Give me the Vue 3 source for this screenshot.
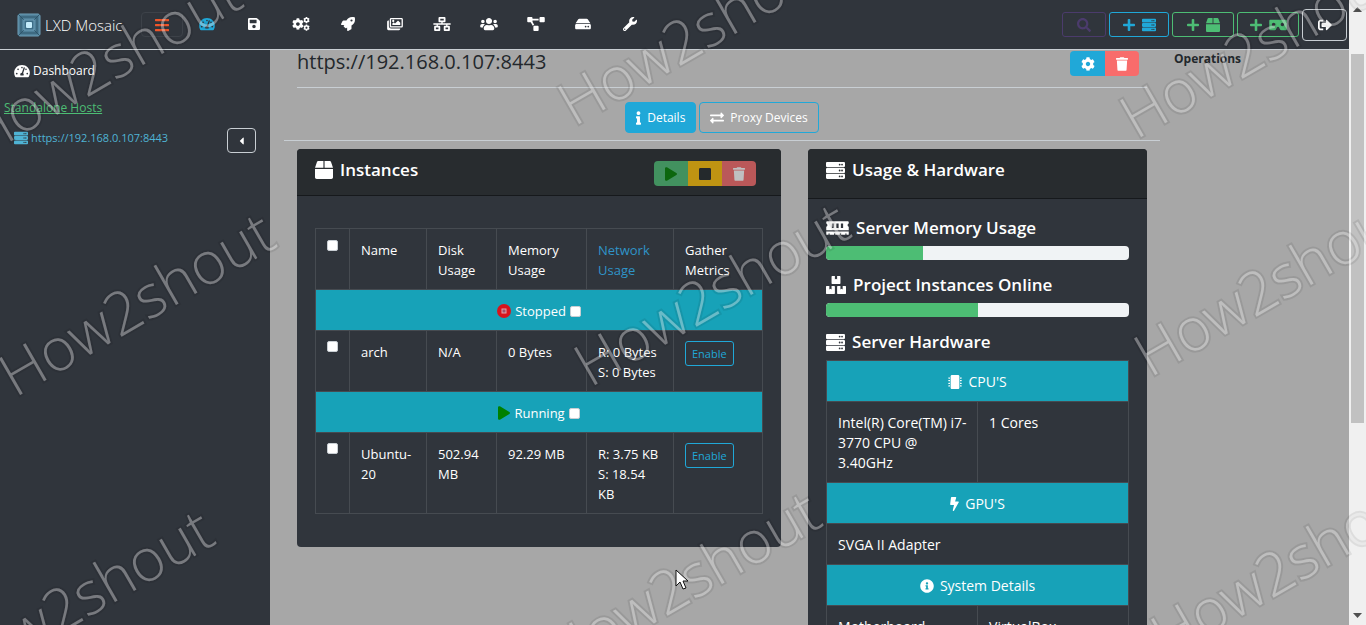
<script setup>
import { h } from 'vue'

const COG = 'M487.4 315.7l-42.6-24.6c4.3-23.2 4.3-47 0-70.2l42.6-24.6c4.9-2.8 7.1-8.6 5.5-14-11.1-35.6-30-67.8-54.7-94.6-3.8-4.1-10-5.1-14.8-2.3L380.8 110c-17.9-15.4-38.5-27.3-60.8-35.1V25.8c0-5.6-3.9-10.5-9.4-11.7-36.7-8.2-74.3-7.8-109.2 0-5.5 1.2-9.4 6.1-9.4 11.7V75c-22.2 7.9-42.8 19.8-60.8 35.1L88.7 85.5c-4.9-2.8-11-1.9-14.8 2.3-24.7 26.7-43.6 58.9-54.7 94.6-1.7 5.4.6 11.2 5.5 14L67.3 221c-4.3 23.2-4.3 47 0 70.2l-42.6 24.6c-4.9 2.8-7.1 8.6-5.5 14 11.1 35.6 30 67.8 54.7 94.6 3.8 4.1 10 5.1 14.8 2.3l42.6-24.6c17.9 15.4 38.5 27.3 60.8 35.1v49.2c0 5.6 3.9 10.5 9.4 11.7 36.7 8.2 74.3 7.8 109.2 0 5.5-1.2 9.4-6.1 9.4-11.7v-49.2c22.2-7.9 42.8-19.8 60.8-35.1l42.6 24.6c4.9 2.8 11 1.9 14.8-2.3 24.7-26.7 43.6-58.9 54.7-94.6 1.5-5.5-.7-11.3-5.6-14.1zM256 336c-44.1 0-80-35.9-80-80s35.9-80 80-80 80 35.9 80 80-35.9 80-80 80z'

const dot = (x, y) => `M${x} ${y}m-24 0a24 24 0 1 0 48 0a24 24 0 1 0 -48 0z`
const bay = (y) => `M480 ${y + 140}H32c-17.673 0-32-14.327-32-32V${y + 32}c0-17.673 14.327-32 32-32h448c17.673 0 32 14.327 32 32v76c0 17.673-14.327 32-32 32z${dot(432, y + 70)}${dot(368, y + 70)}`
const pins = [88, 184, 280, 376].map((y) => `M0 ${y + 14}h24v-14h48v48H24v-14H0zM512 ${y + 14}h-24v-14h-48v48h48v-14h24z`).join('')

const icons = {
  server: [512, bay(26) + bay(186) + bay(346)],
  box: [512, 'M509.5 184.6L458.9 32.8C452.4 13.2 434.1 0 413.4 0H272v192h238.7c-.4-2.5-.4-5-1.2-7.4zM240 0H98.6c-20.7 0-39 13.2-45.5 32.8L2.5 184.6c-.8 2.4-.8 4.9-1.2 7.4H240V0zM0 224v240c0 26.5 21.5 48 48 48h416c26.5 0 48-21.5 48-48V224H0z'],
  play: [448, 'M424.4 214.7L72.4 6.6C43.8-10.3 0 6.1 0 47.9V464c0 37.5 40.7 60.1 72.4 41.3l352-208c31.4-18.5 31.5-64.1 0-82.6z'],
  stop: [448, 'M400 32H48C21.5 32 0 53.5 0 80v352c0 26.5 21.5 48 48 48h352c26.5 0 48-21.5 48-48V80c0-26.5-21.5-48-48-48z'],
  trash: [448, 'M432 32H312l-9.4-18.7A24 24 0 0 0 281.1 0H166.8a23.72 23.72 0 0 0-21.4 13.3L136 32H16A16 16 0 0 0 0 48v32a16 16 0 0 0 16 16h416a16 16 0 0 0 16-16V48a16 16 0 0 0-16-16zM53.2 467a48 48 0 0 0 47.9 45h245.8a48 48 0 0 0 47.9-45L416 128H32z'],
  plus: [448, 'M416 208H272V64c0-17.67-14.33-32-32-32h-32c-17.67 0-32 14.33-32 32v144H32c-17.67 0-32 14.33-32 32v32c0 17.67 14.33 32 32 32h144v144c0 17.67 14.33 32 32 32h32c17.67 0 32-14.33 32-32V304h144c17.67 0 32-14.33 32-32v-32c0-17.67-14.33-32-32-32z'],
  search: [512, 'M505 442.7L405.3 343c-4.5-4.5-10.6-7-17-7H372c27.6-35.3 44-79.7 44-128C416 93.1 322.9 0 208 0S0 93.1 0 208s93.1 208 208 208c48.3 0 92.7-16.4 128-44v16.3c0 6.4 2.5 12.5 7 17l99.7 99.7c9.4 9.4 24.6 9.4 33.9 0l28.3-28.3c9.4-9.4 9.4-24.6.1-34zM208 336c-70.7 0-128-57.2-128-128 0-70.7 57.2-128 128-128 70.7 0 128 57.2 128 128 0 70.7-57.2 128-128 128z'],
  info: [192, 'M20 424.229h20V279.771H20c-11.046 0-20-8.954-20-20V212c0-11.046 8.954-20 20-20h112c11.046 0 20 8.954 20 20v212.229h20c11.046 0 20 8.954 20 20V492c0 11.046-8.954 20-20 20H20c-11.046 0-20-8.954-20-20v-47.771c0-11.046 8.954-20 20-20zM96 0C56.235 0 24 32.235 24 72s32.235 72 72 72 72-32.235 72-72S135.764 0 96 0z'],
  infoCircle: [512, 'M256 8C119.043 8 8 119.083 8 256c0 136.997 111.043 248 248 248s248-111.003 248-248C504 119.083 392.957 8 256 8zm0 110c23.196 0 42 18.804 42 42s-18.804 42-42 42-42-18.804-42-42 18.804-42 42-42zm56 254c0 6.627-5.373 12-12 12h-88c-6.627 0-12-5.373-12-12v-24c0-6.627 5.373-12 12-12h12v-64h-12c-6.627 0-12-5.373-12-12v-24c0-6.627 5.373-12 12-12h64c6.627 0 12 5.373 12 12v100h12c6.627 0 12 5.373 12 12v24z'],
  exchange: [512, 'M0 168v-16c0-13.255 10.745-24 24-24h360V80c0-21.367 25.899-32.042 40.971-16.971l80 80c9.372 9.373 9.372 24.569 0 33.941l-80 80C409.956 271.982 384 261.456 384 240v-48H24c-13.255 0-24-10.745-24-24zm488 152H128v-48c0-21.314-25.862-32.08-40.971-16.971l-80 80c-9.372 9.373-9.372 24.569 0 33.941l80 80C102.057 463.997 128 453.437 128 432v-48h360c13.255 0 24-10.745 24-24v-16c0-13.255-10.745-24-24-24z'],
  bolt: [320, 'M296 160H180.6l42.6-129.8C227.2 15 215.7 0 200 0H56C44 0 33.8 8.9 32.2 20.8l-32 240C-1.7 275.2 9.5 288 24 288h118.7L96.6 482.5c-3.6 15.2 8 29.5 23.3 29.5 8.4 0 16.4-4.4 20.8-12l176-304c9.3-15.9-2.2-36-20.7-36z'],
  chip: [512, 'M416 48v416c0 26.51-21.49 48-48 48H144c-26.51 0-48-21.49-48-48V48c0-26.51 21.49-48 48-48h224c26.51 0 48 21.49 48 48z' + pins],
  memory: [640, 'M640 130.94V96c0-17.67-14.33-32-32-32H32c-17.67 0-32 14.33-32 32v34.94c18.6 6.61 32 24.19 32 45.06s-13.4 38.45-32 45.06V320h640v-98.94c-18.6-6.61-32-24.19-32-45.06s13.4-38.45 32-45.06zM224 256h-64V128h64v128zm128 0h-64V128h64v128zm128 0h-64V128h64v128zM0 448h64v-26.67c0-8.84 7.16-16 16-16s16 7.16 16 16V448h128v-26.67c0-8.84 7.16-16 16-16s16 7.16 16 16V448h128v-26.67c0-8.84 7.16-16 16-16s16 7.16 16 16V448h128v-26.67c0-8.84 7.16-16 16-16s16 7.16 16 16V448h64v-96H0v96z'],
  boxes: [576, 'M560 288h-80v96l-32-21.3-32 21.3v-96h-80c-8.8 0-16 7.2-16 16v192c0 8.8 7.2 16 16 16h224c8.8 0 16-7.2 16-16V304c0-8.8-7.2-16-16-16zm-384-64h224c8.8 0 16-7.2 16-16V16c0-8.8-7.2-16-16-16h-80v96l-32-21.3L256 96V0h-80c-8.8 0-16 7.2-16 16v192c0 8.8 7.2 16 16 16zm64 64h-80v96l-32-21.3L96 384v-96H16c-8.8 0-16 7.2-16 16v192c0 8.8 7.2 16 16 16h224c8.8 0 16-7.2 16-16V304c0-8.8-7.2-16-16-16z'],
  cog: [512, COG],
  save: [448, 'M433.941 129.941l-83.882-83.882A48 48 0 0 0 316.118 32H48C21.49 32 0 53.49 0 80v352c0 26.51 21.49 48 48 48h352c26.51 0 48-21.49 48-48V163.882a48 48 0 0 0-14.059-33.941zM224 416c-35.346 0-64-28.654-64-64 0-35.346 28.654-64 64-64s64 28.654 64 64c0 35.346-28.654 64-64 64zm96-304.52V212c0 6.627-5.373 12-12 12H76c-6.627 0-12-5.373-12-12V108c0-6.627 5.373-12 12-12h228.52c3.183 0 6.235 1.264 8.485 3.515l3.48 3.48A11.996 11.996 0 0 1 320 111.48z'],
  bars: [448, 'M16 132h416c8.837 0 16-7.163 16-16V76c0-8.837-7.163-16-16-16H16C7.163 60 0 67.163 0 76v40c0 8.837 7.163 16 16 16zm0 160h416c8.837 0 16-7.163 16-16v-40c0-8.837-7.163-16-16-16H16c-8.837 0-16 7.163-16 16v40c0 8.837 7.163 16 16 16zm0 160h416c8.837 0 16-7.163 16-16v-40c0-8.837-7.163-16-16-16H16c-8.837 0-16 7.163-16 16v40c0 8.837 7.163 16 16 16z'],
  gauge: [576, 'M288 32C128.94 32 0 160.94 0 320c0 52.8 14.25 102.26 39.06 144.8 5.61 9.62 16.3 15.2 27.44 15.2h443c11.14 0 21.83-5.58 27.44-15.2C561.75 422.26 576 372.8 576 320c0-159.06-128.94-288-288-288zm0 64c14.71 0 26.58 10.13 30.32 23.65-1.11 2.26-2.64 4.23-3.45 6.67l-9.22 27.67c-5.13 3.49-10.97 6.01-17.64 6.01-17.67 0-32-14.33-32-32S270.33 96 288 96zM96 384c-17.67 0-32-14.33-32-32s14.33-32 32-32 32 14.33 32 32-14.33 32-32 32zm48-160c-17.67 0-32-14.33-32-32s14.33-32 32-32 32 14.33 32 32-14.33 32-32 32zm246.77-72.41l-61.33 184C343.13 347.33 352 364.54 352 384c0 11.72-3.38 22.55-8.88 32H232.88c-5.5-9.45-8.88-20.28-8.88-32 0-33.94 26.5-61.43 59.9-63.59l61.34-184.01c4.17-12.56 17.73-19.45 30.36-15.17 12.57 4.19 19.35 17.79 15.17 30.36zm14.66 57.2l15.52-46.55c3.47-1.29 7.13-2.23 11.05-2.23 17.67 0 32 14.33 32 32s-14.33 32-32 32c-11.38-.01-21.25-6.1-26.57-15.22zM480 384c-17.67 0-32-14.33-32-32s14.33-32 32-32 32 14.33 32 32-14.33 32-32 32z'],
  hdd: [576, 'M576 304v96c0 26.51-21.49 48-48 48H48c-26.51 0-48-21.49-48-48v-96c0-26.51 21.49-48 48-48h480c26.51 0 48 21.49 48 48zm-48-80a79.557 79.557 0 0 1 30.777 6.165L462.25 85.374A48.003 48.003 0 0 0 422.311 64H153.689a48 48 0 0 0-39.938 21.374L17.223 230.165A79.557 79.557 0 0 1 48 224h480zm-48 96c-17.673 0-32 14.327-32 32s14.327 32 32 32 32-14.327 32-32-14.327-32-32-32zm-96 0c-17.673 0-32 14.327-32 32s14.327 32 32 32 32-14.327 32-32-14.327-32-32-32z'],
  wrench: [512, 'M507.73 109.1c-2.24-9.03-13.54-12.09-20.12-5.51l-74.36 74.36-67.88-11.31-11.31-67.88 74.36-74.36c6.62-6.62 3.43-17.9-5.66-20.16-47.38-11.74-99.55.91-136.58 37.93-39.64 39.64-50.55 97.1-34.05 147.2L18.74 402.76c-24.99 24.99-24.99 65.51 0 90.5 24.99 24.99 65.51 24.99 90.5 0l213.21-213.21c50.12 16.71 107.47 5.68 147.37-34.22 37.07-37.07 49.7-89.32 37.91-136.73zM64 472c-13.25 0-24-10.75-24-24 0-13.26 10.75-24 24-24s24 10.74 24 24c0 13.25-10.75 24-24 24z'],
  rocket: [512, 'M505.12 19.09c-1.19-5.53-6.66-11-12.21-12.19C460.72 0 435.51 0 410.41 0 307.18 0 245.27 55.2 199.05 128H94.84c-16.35.02-35.56 11.88-42.89 26.48L2.52 253.3A28.4 28.4 0 0 0 0 264a24 24 0 0 0 24 24h103.82l-22.48 22.47c-11.36 11.36-12.99 32.26 0 45.25l50.9 50.9c11.16 11.19 32.16 13.16 45.28 0L224 384.16V488a24 24 0 0 0 24 24 28.56 28.56 0 0 0 10.71-2.52l98.73-49.39c14.63-7.29 26.5-26.5 26.5-42.86V312.8C456.54 266.48 512 204.39 512 101.7c.07-25.2.07-50.4-6.88-82.61zM384.04 168A40 40 0 1 1 424.05 128 40.02 40.02 0 0 1 384.04 168z'],
  images: [576, 'M480 416v16c0 26.51-21.49 48-48 48H48c-26.51 0-48-21.49-48-48V176c0-26.51 21.49-48 48-48h16v208c0 44.112 35.888 80 80 80h336zm42-336H150a6 6 0 0 0-6 6v244a6 6 0 0 0 6 6h372a6 6 0 0 0 6-6V86a6 6 0 0 0-6-6zm6-48c26.51 0 48 21.49 48 48v256c0 26.51-21.49 48-48 48H144c-26.51 0-48-21.49-48-48V80c0-26.51 21.49-48 48-48h384zM264 144c0 22.091-17.909 40-40 40s-40-17.909-40-40 17.909-40 40-40 40 17.909 40 40zm-72 96l39.515-39.515c4.686-4.686 12.284-4.686 16.971 0L288 240l103.515-103.515c4.686-4.686 12.284-4.686 16.971 0L480 208v80H192v-48z'],
  network: [640, 'M640 264v-16c0-8.84-7.16-16-16-16H344v-40h72c17.67 0 32-14.33 32-32V32c0-17.67-14.33-32-32-32H224c-17.67 0-32 14.33-32 32v128c0 17.67 14.33 32 32 32h72v40H16c-8.84 0-16 7.16-16 16v16c0 8.84 7.16 16 16 16h104v40H64c-17.67 0-32 14.33-32 32v128c0 17.67 14.33 32 32 32h160c17.67 0 32-14.33 32-32V352c0-17.67-14.33-32-32-32h-56v-40h304v40h-56c-17.67 0-32 14.33-32 32v128c0 17.67 14.33 32 32 32h160c17.67 0 32-14.33 32-32V352c0-17.67-14.33-32-32-32h-56v-40h104c8.84 0 16-7.16 16-16zM256 128V64h128v64H256zm-64 320H96v-64h96v64zm352 0h-96v-64h96v64z'],
  users: [640, 'M96 224c35.3 0 64-28.7 64-64s-28.7-64-64-64-64 28.7-64 64 28.7 64 64 64zm448 0c35.3 0 64-28.7 64-64s-28.7-64-64-64-64 28.7-64 64 28.7 64 64 64zm32 32h-64c-17.6 0-33.5 7.1-45.1 18.6 40.3 22.1 68.9 62 75.1 109.4h66c17.7 0 32-14.3 32-32v-32c0-35.3-28.7-64-64-64zm-256 0c61.9 0 112-50.1 112-112S381.9 32 320 32 208 82.1 208 144s50.1 112 112 112zm76.8 32h-8.3c-20.8 10-43.9 16-68.5 16s-47.6-6-68.5-16h-8.3C179.6 288 128 339.6 128 403.2V432c0 26.5 21.5 48 48 48h288c26.5 0 48-21.5 48-48v-28.8c0-63.6-51.6-115.2-115.2-115.2zm-223.7-13.4C161.5 263.1 145.6 256 128 256H64c-35.3 0-64 28.7-64 64v32c0 17.7 14.3 32 32 32h65.9c6.3-47.4 34.9-87.3 75.2-109.4z'],
  diagram: [640, 'M384 320H256c-17.67 0-32 14.33-32 32v128c0 17.67 14.33 32 32 32h128c17.67 0 32-14.33 32-32V352c0-17.67-14.33-32-32-32zM192 32c0-17.67-14.33-32-32-32H32C14.33 0 0 14.33 0 32v128c0 17.67 14.33 32 32 32h95.72l73.16 128.04C211.98 300.98 232.4 288 256 288h.28L192 175.51V128h224V64H192V32zM608 0H480c-17.67 0-32 14.33-32 32v128c0 17.67 14.33 32 32 32h128c17.67 0 32-14.33 32-32V32c0-17.67-14.33-32-32-32z'],
  cardboard: [640, 'M608 64H32C14.33 64 0 78.33 0 96v320c0 17.67 14.33 32 32 32h160.22c25.19 0 48.03-14.77 58.36-37.74l27.74-61.64C286.21 331.08 302.35 320 320 320s33.79 11.08 41.68 28.62l27.74 61.64C399.75 433.23 422.6 448 447.78 448H608c17.67 0 32-14.33 32-32V96c0-17.67-14.33-32-32-32zM160 304c-35.35 0-64-28.65-64-64s28.65-64 64-64 64 28.65 64 64-28.65 64-64 64zm320 0c-35.35 0-64-28.65-64-64s28.65-64 64-64 64 28.65 64 64-28.65 64-64 64z'],
  signOut: [512, 'M497 273L329 441c-15 15-41 4.5-41-17v-96H152c-13.3 0-24-10.7-24-24v-96c0-13.3 10.7-24 24-24h136V88c0-21.4 25.9-32 41-17l168 168c9.3 9.4 9.3 24.6 0 34zM192 436v-40c0-6.6-5.4-12-12-12H96c-17.7 0-32-14.3-32-32V160c0-17.7 14.3-32 32-32h84c6.6 0 12-5.4 12-12V76c0-6.6-5.4-12-12-12H96c-53 0-96 43-96 96v192c0 53 43 96 96 96h84c6.6 0 12-5.4 12-12z'],
  caretLeft: [192, 'M192 128v256c0 17.8-21.5 26.7-34.1 14.1l-128-128c-7.8-7.8-7.8-20.5 0-28.3l128-128c12.6-12.5 34.1-3.6 34.1 14.2z']
}

function Icon(props) {
  const size = props.size || 14
  if (props.name === 'cogs') {
    return h('svg', { viewBox: '0 0 640 512', width: Math.round(size * 1.25), height: size, fill: 'currentColor', 'aria-hidden': 'true' }, [
      h('path', { d: COG, transform: 'translate(-8 40) scale(.84)' }),
      h('path', { d: COG, transform: 'translate(400 -8) scale(.47)' }),
      h('path', { d: COG, transform: 'translate(400 270) scale(.47)' })
    ])
  }
  const [w, d] = icons[props.name]
  return h('svg', { viewBox: `0 0 ${w} 512`, width: Math.round((size * w) / 512), height: size, fill: 'currentColor', 'aria-hidden': 'true' }, [
    h('path', { d, 'fill-rule': props.name === 'server' ? 'evenodd' : 'nonzero' })
  ])
}
Icon.props = ['name', 'size']

const nav = [
  ['gauge', 'Dashboard'], ['save', 'Backups'], ['cogs', 'Profiles'], ['rocket', 'Deployments'], ['images', 'Images'],
  ['network', 'Networks'], ['users', 'Users'], ['diagram', 'Projects'], ['hdd', 'Storage'], ['wrench', 'Settings']
]

const groups = [
  { state: 'Stopped', rows: [{ name: 'arch', disk: 'N/A', memory: '0 Bytes', received: '0 Bytes', sent: '0 Bytes' }] },
  { state: 'Running', rows: [{ name: 'Ubuntu-20', disk: '502.94 MB', memory: '92.29 MB', received: '3.75 KB', sent: '18.54 KB' }] }
]

const meters = [
  { icon: 'memory', label: 'Server Memory Usage', value: 32 },
  { icon: 'boxes', label: 'Project Instances Online', value: 50 }
]

const marks = [
  [-18, 158], [15, 398], [-46, 695], [574, 127], [590, 388], [561, 677], [1136, 140], [1150, 378], [1167, 659]
]
</script>

<template>
  <div class="window">
    <div class="app">
      <header class="topbar">
        <a class="brand" href="#">
          <svg width="24" height="24" viewBox="0 0 24 24" aria-hidden="true">
            <rect x="1" y="1" width="22" height="22" rx="2" fill="#4f7f98" stroke="#6fa0b8" />
            <path d="M1 1l22 22M23 1L1 23" stroke="#2f566b" />
            <rect x="4" y="4" width="16" height="16" fill="none" stroke="#2f566b" />
            <rect x="7" y="7" width="10" height="10" fill="#3c6d87" stroke="#6fa0b8" />
            <rect x="9" y="9" width="6" height="6" rx="1" fill="#c4ecfb" />
          </svg>
          <span>LXD Mosaic</span>
        </a>
        <button class="menu" type="button" aria-label="Toggle sidebar"><Icon name="bars" :size="16" /></button>
        <nav class="nav">
          <a v-for="([icon, label], i) in nav" :key="icon" href="#" :aria-label="label" :class="{ current: i === 0 }">
            <Icon :name="icon" />
          </a>
        </nav>
        <div class="tools">
          <button class="tool search" type="button" aria-label="Search"><Icon name="search" /></button>
          <button class="tool blue" type="button" aria-label="Add host"><Icon name="plus" /><Icon name="server" /></button>
          <button class="tool green" type="button" aria-label="Add container"><Icon name="plus" /><Icon name="box" /></button>
          <button class="tool green" type="button" aria-label="Add virtual machine"><Icon name="plus" /><Icon name="cardboard" /></button>
          <button class="tool logout" type="button" aria-label="Log out"><Icon name="signOut" /></button>
        </div>
      </header>

      <div class="body">
        <aside class="sidebar">
          <a class="side-link" href="#"><Icon name="gauge" /><span>Dashboard</span></a>
          <a class="group" href="#">Standalone Hosts</a>
          <div class="host">
            <a class="side-link host-link" href="#"><Icon name="server" /><span>https://192.168.0.107:8443</span></a>
            <button class="collapse" type="button" aria-label="Collapse host"><Icon name="caretLeft" :size="12" /></button>
          </div>
        </aside>

        <main class="main">
          <div class="content">
            <div class="title-row">
              <h1>https://192.168.0.107:8443</h1>
              <div class="btn-group host-actions">
                <button class="seg primary" type="button" aria-label="Host settings"><Icon name="cog" /></button>
                <button class="seg danger" type="button" aria-label="Delete host"><Icon name="trash" /></button>
              </div>
            </div>
            <div class="tabs">
              <button class="tab active" type="button"><Icon name="info" /><span>Details</span></button>
              <button class="tab" type="button"><Icon name="exchange" /><span>Proxy Devices</span></button>
            </div>

            <div class="cards">
              <section class="card">
                <div class="card-head">
                  <h2><Icon name="box" :size="18" /><span>Instances</span></h2>
                  <div class="btn-group muted">
                    <button class="seg success" type="button" aria-label="Start"><Icon name="play" /></button>
                    <button class="seg warning" type="button" aria-label="Stop"><Icon name="stop" /></button>
                    <button class="seg danger" type="button" aria-label="Delete"><Icon name="trash" /></button>
                  </div>
                </div>
                <div class="instances-body">
                  <table class="grid instances">
                    <colgroup>
                      <col class="c1" /><col class="c2" /><col class="c3" /><col class="c4" /><col class="c5" /><col class="c6" />
                    </colgroup>
                    <thead>
                      <tr>
                        <th><input type="checkbox" aria-label="Select all instances" /></th>
                        <th>Name</th>
                        <th>Disk Usage</th>
                        <th>Memory Usage</th>
                        <th><a href="#">Network Usage</a></th>
                        <th>Gather Metrics</th>
                      </tr>
                    </thead>
                    <tbody v-for="g in groups" :key="g.state">
                      <tr class="band">
                        <td colspan="6">
                          <label>
                            <svg v-if="g.state === 'Stopped'" width="14" height="14" viewBox="0 0 14 14" aria-hidden="true">
                              <circle cx="7" cy="7" r="7" fill="#d8141c" />
                              <rect x="5" y="5" width="4" height="4" fill="#a0506a" stroke="#e8a0a8" />
                            </svg>
                            <Icon v-else class="running" name="play" />
                            <span>{{ g.state }}</span>
                            <input type="checkbox" />
                          </label>
                        </td>
                      </tr>
                      <tr v-for="r in g.rows" :key="r.name">
                        <td class="control"><input type="checkbox" :aria-label="'Select ' + r.name" /></td>
                        <td>{{ r.name }}</td>
                        <td>{{ r.disk }}</td>
                        <td>{{ r.memory }}</td>
                        <td>R: {{ r.received }}<br />S: {{ r.sent }}</td>
                        <td class="control"><button class="enable" type="button">Enable</button></td>
                      </tr>
                    </tbody>
                  </table>
                </div>
              </section>

              <section class="card">
                <div class="card-head tall">
                  <h2><Icon name="server" :size="19" /><span>Usage &amp; Hardware</span></h2>
                </div>
                <div class="usage-body">
                  <template v-for="m in meters" :key="m.label">
                    <h3><Icon :name="m.icon" :size="18" /><span>{{ m.label }}</span></h3>
                    <div class="meter" role="progressbar" :aria-label="m.label" :aria-valuenow="m.value" aria-valuemin="0" aria-valuemax="100">
                      <div class="fill" :style="{ width: m.value + '%' }"></div>
                    </div>
                  </template>
                  <h3><Icon name="server" :size="19" /><span>Server Hardware</span></h3>
                  <table class="grid hardware">
                    <tbody>
                      <tr class="band"><th colspan="2"><span class="cap"><Icon name="chip" /><span>CPU'S</span></span></th></tr>
                      <tr><td>Intel(R) Core(TM) i7-3770 CPU @ 3.40GHz</td><td>1 Cores</td></tr>
                      <tr class="band"><th colspan="2"><span class="cap"><Icon name="bolt" /><span>GPU'S</span></span></th></tr>
                      <tr><td colspan="2">SVGA II Adapter</td></tr>
                      <tr class="band"><th colspan="2"><span class="cap"><Icon name="infoCircle" /><span>System Details</span></span></th></tr>
                      <tr><td>Motherboard</td><td>VirtualBox</td></tr>
                    </tbody>
                  </table>
                </div>
              </section>
            </div>
          </div>
          <aside class="operations"><h4>Operations</h4></aside>
        </main>
      </div>
    </div>

    <div class="scrollbar" aria-hidden="true">
      <svg width="9" height="5" viewBox="0 0 9 5"><path d="M0 5L4.500 0L9 5z" fill="#505050" /></svg>
      <div class="track"><div class="thumb"></div></div>
      <svg width="9" height="5" viewBox="0 0 9 5"><path d="M0 0L4.500 5L9 0z" fill="#505050" /></svg>
    </div>

    <svg class="watermark" aria-hidden="true">
      <text v-for="([x, y], i) in marks" :key="i" :x="x" :y="y" :transform="`rotate(-30 ${x} ${y})`">How2shout</text>
    </svg>
    <svg class="pointer" width="14" height="21" viewBox="0 0 14 21" aria-hidden="true">
      <path d="M1 1v16l4-4 3 7 3-1-3-7h5z" fill="#fff" stroke="#111" />
    </svg>
  </div>
</template>

<style>
html, body { background: #a7a7a7; }
</style>

<style scoped>
.window {
  position: relative;
  display: grid;
  grid-template-columns: minmax(0, 1fr) 17px;
  height: 100vh;
  overflow: hidden;
  font-family: "Open Sans", "Noto Sans", sans-serif;
  font-size: 12px;
  line-height: 20px;
  color: #fff;
}
.window * { box-sizing: border-box; }
svg { display: block; flex: none; }
a { color: inherit; text-decoration: none; }
button { font: inherit; color: inherit; background: none; cursor: pointer; padding: 0; }
h1, h2, h3, h4 { margin: 0; }

.app { display: flex; flex-direction: column; min-height: 0; background: #a7a7a7; }
.topbar {
  display: flex;
  align-items: center;
  flex: none;
  height: 50px;
  padding: 0 2px 0 17px;
  background: #30353c;
  border-bottom: 1px solid #c8ced3;
}
.brand { display: flex; align-items: center; gap: 4px; width: 124px; font-size: 15px; font-weight: 300; white-space: nowrap; }
.menu { display: flex; align-items: center; justify-content: center; width: 42px; height: 25px; border: 1px solid #3d4249; border-radius: 4px; color: #f0562a; }
.nav { display: flex; flex: 1; }
.nav a { display: flex; justify-content: center; width: 47px; padding-bottom: 1px; }
.nav .current { color: #20a8d8; }
.tools { display: flex; align-items: center; gap: 3px; }
.tool { display: flex; align-items: center; justify-content: center; gap: 7px; height: 25px; border: 1px solid; border-radius: 3px; }
.search { width: 44px; color: #4b3b6c; }
.blue { width: 60px; color: #20a8d8; }
.green { width: 62px; color: #4dbd74; }
.logout { width: 45px; height: 32px; border-color: #c8ced3; border-radius: 4px; }

.body { display: flex; flex: 1; min-height: 0; }
.sidebar { flex: none; width: 270px; padding: 11px 14px 0 4px; background: #30353c; }
.side-link { display: flex; align-items: center; gap: 3px; padding-left: 10px; }
.group { display: inline-block; margin-top: 17px; color: #4dbd74; text-decoration: underline; }
.host { display: flex; align-items: flex-start; justify-content: space-between; margin-top: 10px; }
.host-link { color: #4fb3d4; font-size: 11px; }
.collapse { display: flex; align-items: center; justify-content: center; width: 29px; height: 25px; border: 1px solid #c8ced3; border-radius: 4px; }

.main { display: flex; flex: 1; min-width: 0; overflow: hidden; color: #23282c; }
.content { flex: 1; min-width: 0; margin-left: 14px; }
.title-row { display: flex; align-items: flex-start; justify-content: space-between; height: 38px; margin: 0 13px; padding-right: 8px; border-bottom: 1px solid #c8ced3; }
h1 { font-size: 20px; line-height: 24px; font-weight: 400; }
.btn-group { display: flex; color: #fff; border-radius: 4px; overflow: hidden; }
.host-actions { margin-top: 1px; }
.seg { display: flex; align-items: center; justify-content: center; width: 34px; height: 25px; border: 0; }
.primary { width: 35px; background: #20a8d8; }
.danger { background: #f86c6b; }
.success { background: #4dbd74; color: #008000; }
.warning { background: #ffc107; color: #23282c; }
.muted { margin-right: 7px; }
.muted .seg { opacity: .7; }
.tabs { display: flex; justify-content: center; gap: 3px; padding: 14px 0 7px; border-bottom: 1px solid #c8ced3; }
.tab { display: flex; align-items: center; gap: 6px; height: 31px; padding: 0 10px; border: 1px solid #20a8d8; border-radius: 4px; color: #fff; }
.tab.active { background: #20a8d8; }
.cards { display: grid; grid-template-columns: 10fr 7fr; align-items: start; gap: 27px; margin: 8px 13px 0; color: #fff; }
.card { min-width: 0; border-radius: 4px; background: #30353c; }
.card-head { display: flex; align-items: flex-start; justify-content: space-between; padding: 11px 18px 9px; border-bottom: 1px solid #16191c; border-radius: 4px 4px 0 0; background: #282c2f; }
.card-head .btn-group { margin-top: 1px; }
.card-head.tall { padding-bottom: 18px; }
h2, h3 { display: flex; align-items: center; gap: 7px; font-size: 17px; line-height: 20px; font-weight: 600; white-space: nowrap; }
h3 { margin-bottom: 8px; }
.instances-body { padding: 32px 18px 33px; }
.usage-body { padding: 19px 18px; }
.meter { height: 14px; margin-bottom: 15px; border-radius: 4px; overflow: hidden; background: #f0f3f5; }
.fill { height: 100%; background: #4dbd74; }

.grid { width: 100%; table-layout: fixed; border-collapse: collapse; }
.instances { font-size: 13px; }
.hardware { font-size: 14px; }
.grid th, .grid td { padding: 11px 11px 9px; border: 1px solid #464b51; text-align: left; vertical-align: top; font-weight: 400; }
.grid .control { padding-top: 10px; }
.hardware td { padding-right: 4px; }
.grid .band > * { background: #17a2b8; text-align: center; }
.c1 { width: 34px; }
.c2 { width: 77px; }
.c3 { width: 70px; }
.c4 { width: 90px; }
.c5 { width: 87px; }
.instances th a { color: #2f94c8; }
.band label, .cap { display: flex; align-items: center; justify-content: center; gap: 4px; }
.cap { gap: 6px; }
.running { color: #008000; }
input[type="checkbox"] { appearance: none; display: block; width: 11px; height: 11px; margin: 0; border: 1px solid #c8ced3; border-radius: 2px; background: #fff; }
.enable { display: block; height: 25px; padding: 0 6px; border: 1px solid #20a8d8; border-radius: 3px; color: #20a8d8; font-size: 11px; }

.operations { flex: none; width: 189px; padding-left: 14px; }
h4 { font-size: 12px; line-height: 18px; font-weight: 700; }

.scrollbar { display: flex; flex-direction: column; align-items: center; padding: 7px 0; background: #f0f0f0; }
.track { flex: 1; padding-top: 42px; }
.thumb { width: 13px; height: 66%; background: #c1c1c1; }

.watermark { position: absolute; inset: 0; width: 100%; height: 100%; pointer-events: none; }
.watermark text { font-size: 59px; font-weight: 300; fill: rgba(255, 255, 255, .36); stroke: rgba(0, 0, 0, .08); stroke-width: 4px; paint-order: stroke; }
.pointer { position: absolute; left: 675px; top: 569px; }
</style>
